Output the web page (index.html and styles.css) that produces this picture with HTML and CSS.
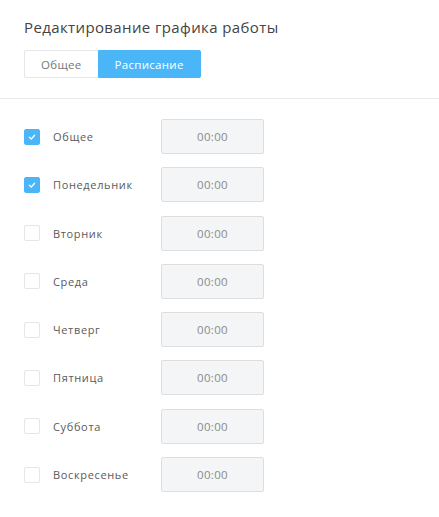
FILE: index.html
```html
<!DOCTYPE html>
<html lang="ru">
<head>
<meta charset="utf-8">
<link rel="stylesheet" href="styles.css">
</head>
<body>
<div class="head">
  <h1 class="title">Редактирование графика работы</h1>
  <div class="tabs">
    <button class="tab">Общее</button>
    <button class="tab tab-active">Расписание</button>
  </div>
</div>
<div class="rows">
  <div class="row"><span class="cb cb-on"><svg viewBox="0 0 16 16"><polyline points="5,8.3 7.2,10.3 11,6" /></svg></span><span class="label">Общее</span><div class="time">00:00</div></div>
  <div class="row"><span class="cb cb-on"><svg viewBox="0 0 16 16"><polyline points="5,8.3 7.2,10.3 11,6" /></svg></span><span class="label">Понедельник</span><div class="time">00:00</div></div>
  <div class="row"><span class="cb"></span><span class="label">Вторник</span><div class="time">00:00</div></div>
  <div class="row"><span class="cb"></span><span class="label">Среда</span><div class="time">00:00</div></div>
  <div class="row"><span class="cb"></span><span class="label">Четверг</span><div class="time">00:00</div></div>
  <div class="row"><span class="cb"></span><span class="label">Пятница</span><div class="time">00:00</div></div>
  <div class="row"><span class="cb"></span><span class="label">Суббота</span><div class="time">00:00</div></div>
  <div class="row"><span class="cb"></span><span class="label">Воскресенье</span><div class="time">00:00</div></div>
</div>
</body>
</html>
```
FILE: styles.css
```css
html, body {
  margin: 0;
  padding: 0;
  background: #fff;
}
body {
  font-family: "Open Sans", "Noto Sans", sans-serif;
  color: #4a4a4a;
}
.head {
  padding: 17px 24px 20px;
  border-bottom: 1px solid #ebebeb;
}
.title {
  margin: 0;
  font-size: 15px;
  line-height: 21px;
  font-weight: 400;
  color: #444;
  letter-spacing: 0.38px;
}
.tabs {
  display: flex;
  margin-top: 12px;
}
.tab {
  font-family: inherit;
  font-size: 11.5px;
  height: 28px;
  padding: 0 16px;
  border: 1px solid #e6e6e6;
  background: #fff;
  color: #777;
  letter-spacing: 0.3px;
  cursor: pointer;
}
.tab:first-child {
  border-radius: 2px 0 0 2px;
  border-right: none;
}
.tab-active {
  background: #4ab6f8;
  border-color: #4ab6f8;
  color: #fff;
  border-radius: 0 2px 2px 0;
}
.rows {
  display: flex;
  flex-direction: column;
  gap: 13.3px;
  padding: 20px 24px;
}
.row {
  display: flex;
  align-items: center;
  height: 35px;
}
.cb {
  width: 16px;
  height: 16px;
  box-sizing: border-box;
  border: 1px solid #e6e6e6;
  border-radius: 2px;
  margin-right: 13px;
  flex: none;
}
.cb-on {
  background: #4ab6f8;
  border-color: #4ab6f8;
}
.cb svg {
  display: block;
  width: 14px;
  height: 14px;
  fill: none;
  stroke: #fff;
  stroke-width: 1.4;
  stroke-linecap: round;
  stroke-linejoin: round;
}
.label {
  width: 108px;
  font-size: 11px;
  color: #5a5a5a;
  letter-spacing: 0.65px;
}
.time {
  width: 103px;
  height: 35px;
  box-sizing: border-box;
  border: 1px solid #dedede;
  border-radius: 2px;
  background: #f4f5f7;
  color: #8a8a8a;
  font-size: 11.5px;
  display: flex;
  align-items: center;
  justify-content: center;
  letter-spacing: 0.3px;
}
```
